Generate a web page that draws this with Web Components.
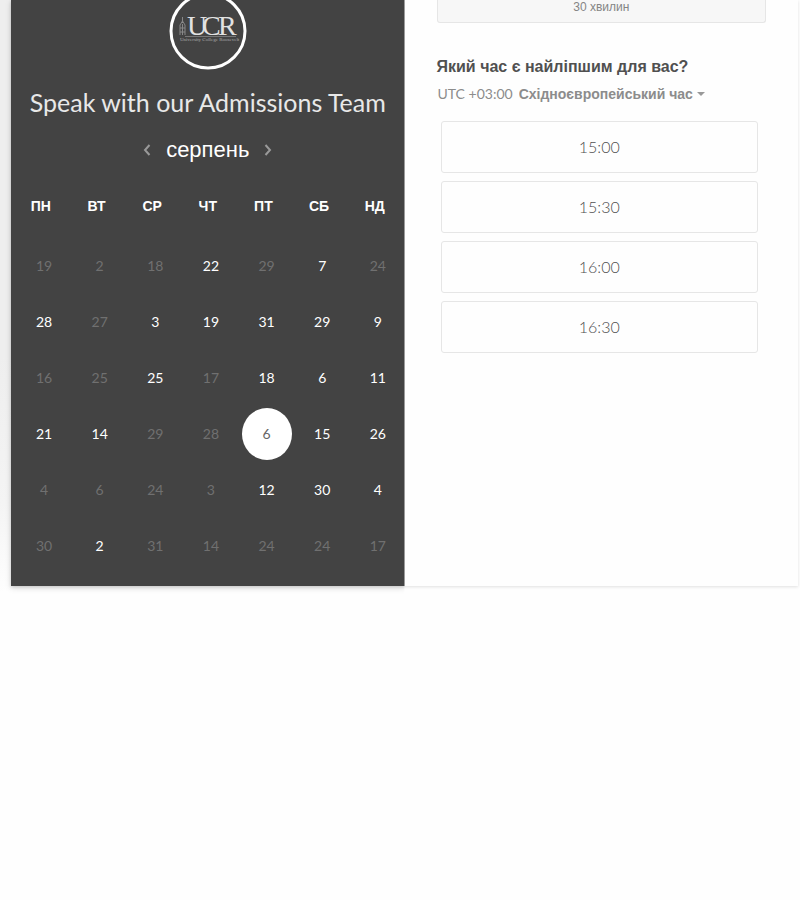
<!DOCTYPE html>
<html lang="uk">
<head>
<meta charset="utf-8">
<meta name="viewport" content="width=device-width, initial-scale=1">
<title>Speak with our Admissions Team</title>
<style>
  body {
    margin: 0;
    background: #fefefe;
    color: #505050;
    font-family: "Liberation Sans", Arial, sans-serif;
    --latin: Lato, "Liberation Sans", sans-serif;
    --panel: #434343;
    --line: #e6e6e6;
  }
</style>
</head>
<body>
<booking-page>
  <booking-calendar slot="calendar" heading="Speak with our Admissions Team" month="серпень">
    <brand-logo slot="logo"></brand-logo>
  </booking-calendar>
  <booking-times slot="times">
    <duration-option slot="duration">30 хвилин</duration-option>
    <span slot="question">Який час є найліпшим для вас?</span>
    <zone-picker slot="zone" offset="UTC +03:00" zone="Східноєвропейський час"></zone-picker>
    <time-slot>15:00</time-slot>
    <time-slot>15:30</time-slot>
    <time-slot>16:00</time-slot>
    <time-slot>16:30</time-slot>
  </booking-times>
</booking-page>

<script>
const define = (name, render) => customElements.define(name, class extends HTMLElement {
  connectedCallback() {
    if (this.shadowRoot) return;
    const template = document.createElement('template');
    template.innerHTML = render(this);
    this.attachShadow({ mode: 'open' }).append(template.content.cloneNode(true));
  }
});

define('booking-page', () => `
  <style>
    :host { display: block; padding: 0 2px 16px 11px;
      background: linear-gradient(#eee, #eee 60%, #f4f4f4 85%, #fefefe) 0 0 / 11px 592px no-repeat; }
    main { display: grid; grid-template-columns: 1fr 1fr; background: #fefefe;
      box-shadow: 0 1px 3px rgba(0, 0, 0, .12); }
  </style>
  <main><slot name="calendar"></slot><slot name="times"></slot></main>`);

define('brand-logo', () => `
  <style>
    :host { display: block; }
    svg { display: block; width: 78px; height: 70px; }
    text { font-family: "Liberation Serif", serif; }
  </style>
  <svg viewBox="0 0 78 70" role="img" aria-label="UCR University College Roosevelt">
    <circle cx="39" cy="31" r="37" fill="none" stroke="#fff" stroke-width="3"/>
    <g fill="none" stroke="#888">
      <path d="M13.500 17v6M11 35V25l2.500-4 2.500 4v10M13.500 24v11M11 28h5M11 32h5"/>
      <path d="M16 36.500h51" stroke="#777"/>
    </g>
    <text x="18 33 49" y="35" font-size="28" fill="#e2e2e2">UCR</text>
    <text x="11" y="41" font-size="5" fill="#aaa">University College Roosevelt</text>
  </svg>`);

/* A leading "-" marks a day that cannot be booked, "*" the chosen one. */
const weeks = [
  '-19 -2 -18 22 -29 7 -24',
  '28 -27 3 19 31 29 9',
  '-16 -25 25 -17 18 6 11',
  '21 14 -29 -28 *6 15 26',
  '-4 -6 -24 -3 12 30 4',
  '-30 2 -31 -14 -24 -24 -17'
];
const day = mark => `<td><button type="button"${mark[0] === '-' ? ' disabled' : ''}${mark[0] === '*' ? ' aria-pressed="true"' : ''}>${mark.replace(/[-*]/, '')}</button></td>`;

define('booking-calendar', host => `
  <style>
    :host { display: block; background: var(--panel); color: #fff; padding: 0 2px 12px 2px;
      box-shadow: 0 2px 6px rgba(0, 0, 0, .15); clip-path: inset(0 0 -12px -12px); }
    header { display: flex; flex-direction: column; align-items: center; }
    h1 { margin: 16px 0 0; font: 400 25px/32px var(--latin); color: #e8e8e8; white-space: nowrap; }
    nav { display: flex; align-items: center; gap: 14px; margin-top: 16px; }
    nav button { display: flex; padding: 0; border: 0; background: none; color: #999; }
    h2 { margin: 0; font-size: 22px; line-height: 32px; font-weight: 400; color: #fff; }
    svg { width: 10px; height: 12px; fill: none; stroke: currentColor; stroke-width: 2; }
    table { width: 100%; margin-top: 24px; table-layout: fixed; border-collapse: collapse; }
    th { padding: 0; height: 32px; font-size: 14px; font-weight: 700; text-align: center; }
    tbody::before { content: ""; display: block; height: 16px; }
    td { padding: 0 0 0 6px; height: 56px; text-align: center; vertical-align: middle; }
    td button { display: block; width: 50px; height: 52px; margin: 0 auto; padding: 0; border: 0;
      border-radius: 50%; background: none; color: #fff; font: 400 14px/20px var(--latin); }
    td button:disabled { color: #707070; }
    td button[aria-pressed] { background: #fff; color: #666; }
  </style>
  <header>
    <slot name="logo"></slot>
    <h1>${host.getAttribute('heading')}</h1>
    <nav>
      <button type="button" aria-label="Попередній місяць"><svg viewBox="0 0 10 12"><path d="M7.500 1 3 6l4.500 5"/></svg></button>
      <h2>${host.getAttribute('month')}</h2>
      <button type="button" aria-label="Наступний місяць"><svg viewBox="0 0 10 12"><path d="M2.500 1 7 6l-4.500 5"/></svg></button>
    </nav>
  </header>
  <table>
    <thead><tr>${['ПН', 'ВТ', 'СР', 'ЧТ', 'ПТ', 'СБ', 'НД'].map(d => `<th scope="col">${d}</th>`).join('')}</tr></thead>
    <tbody>${weeks.map(w => `<tr>${w.split(' ').map(day).join('')}</tr>`).join('')}</tbody>
  </table>`);

define('booking-times', () => `
  <style>
    :host { display: block; padding: 0 32px; }
    h2 { margin: 32px 0 0; font-size: 16px; line-height: 24px; font-weight: 700; color: #505050; white-space: nowrap; }
    .slots { display: grid; gap: 8px; margin: 16px 8px 0 4px; }
  </style>
  <slot name="duration"></slot>
  <h2><slot name="question"></slot></h2>
  <slot name="zone"></slot>
  <div class="slots"><slot></slot></div>`);

define('duration-option', () => `
  <style>
    :host { display: block; }
    button { display: block; width: 100%; padding: 0 0 8px; border: 1px solid var(--line); border-top: 0;
      border-radius: 0 0 3px 3px; background: #f7f7f7; color: #858585; font: 12px/14px "Liberation Sans", Arial, sans-serif; }
  </style>
  <button type="button"><slot></slot></button>`);

define('zone-picker', host => `
  <style>
    :host { display: flex; align-items: center; margin-top: 4px; padding-left: 1px; color: #8c8c8c; }
    label { font: 400 14px/22px var(--latin); white-space: nowrap; }
    select { appearance: none; field-sizing: content; margin: 0 0 0 6px; padding: 0; border: 0; background: none;
      color: inherit; font: 700 14px/22px "Liberation Sans", Arial, sans-serif; }
    svg { width: 8px; height: 4px; margin-left: 4px; fill: #999; }
  </style>
  <label for="zone">${host.getAttribute('offset')}</label>
  <select id="zone"><option>${host.getAttribute('zone')}</option></select>
  <svg viewBox="0 0 8 4" aria-hidden="true"><path d="M0 0h8L4 4z"/></svg>`);

define('time-slot', () => `
  <style>
    :host { display: block; }
    button { display: block; width: 100%; height: 52px; padding: 0; border: 1px solid var(--line);
      border-radius: 3px; background: #fefefe; color: #505050; font: 300 16px/20px var(--latin); }
  </style>
  <button type="button"><slot></slot></button>`);
</script>
</body>
</html>
